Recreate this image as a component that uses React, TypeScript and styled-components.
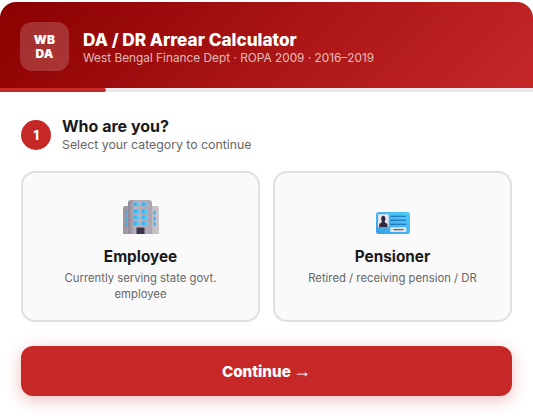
import React, { useState } from 'react';
import styled, { createGlobalStyle } from 'styled-components';

const GlobalStyle = createGlobalStyle`
  html, body {
    margin: 0;
    padding: 0;
    background: #fff;
    font-family: Inter, "Liberation Sans", sans-serif;
  }
  * { box-sizing: border-box; }
`;

const Page = styled.div`
  width: 533px;
  height: 418px;
  padding-top: 2px;
  overflow: hidden;
  background: #fff;
`;

const Header = styled.header`
  height: 86px;
  display: flex;
  align-items: flex-start;
  gap: 14px;
  padding: 20px 20px 0;
  border-radius: 16px 16px 0 0;
  background: linear-gradient(135deg, #8b0000 0%, #c62828 100%);
`;

const Logo = styled.div`
  width: 49px;
  height: 49px;
  border-radius: 12px;
  background: rgba(255, 255, 255, 0.18);
  display: flex;
  align-items: center;
  justify-content: center;
  text-align: center;
  color: #fff;
  font-size: 12px;
  font-weight: 900;
  line-height: 14px;
  letter-spacing: 0.3px;
`;

const HeaderText = styled.div`
  display: flex;
  flex-direction: column;
  padding-top: 7px;
`;

const Title = styled.h1`
  margin: 0;
  color: #fff;
  font-size: 17.2px;
  font-weight: 800;
  line-height: 22px;
`;

const Subtitle = styled.p`
  margin: 0;
  color: rgba(255, 255, 255, 0.72);
  font-size: 11.84px;
  line-height: 15px;
`;

const Track = styled.div`
  height: 4px;
  background: #e8e8e8;
`;

const Fill = styled.div`
  height: 100%;
  background: #c62828;
  border-radius: 0 2px 2px 0;
`;

const Body = styled.main`
  padding: 25px 21px 0;
`;

const StepHead = styled.div`
  display: flex;
  align-items: center;
  gap: 11px;
  margin-bottom: 19px;
`;

const StepBadge = styled.div`
  width: 30px;
  height: 30px;
  border-radius: 50%;
  background: #c62828;
  color: #fff;
  display: flex;
  align-items: center;
  justify-content: center;
  font-size: 13px;
  font-weight: 800;
`;

const StepText = styled.div`
  display: flex;
  flex-direction: column;
`;

const StepTitle = styled.h2`
  margin: 0;
  color: #1a1a1a;
  font-size: 16px;
  font-weight: 700;
  line-height: 18px;
`;

const StepHint = styled.p`
  margin: 2px 0 0;
  color: #666;
  font-size: 12.3px;
  line-height: 15px;
`;

const Choices = styled.div`
  display: grid;
  grid-template-columns: 1fr 1fr;
  gap: 13px;
  margin-bottom: 24px;
`;

const Choice = styled.button<{ $selected?: boolean }>`
  height: 151px;
  padding: 27px 20px 0;
  border: 2px solid ${(p) => (p.$selected ? '#c62828' : '#e0e0e0')};
  border-radius: 14px;
  background: #fafafa;
  font-family: inherit;
  display: flex;
  flex-direction: column;
  align-items: center;
  text-align: center;
  cursor: pointer;
`;

const IconSlot = styled.div`
  height: 34px;
  margin-bottom: 13px;
  display: flex;
  align-items: flex-end;
  justify-content: center;
`;

const ChoiceName = styled.div`
  color: #1a1a1a;
  font-size: 15.3px;
  font-weight: 700;
  line-height: 19px;
  margin-bottom: 3.5px;
`;

const ChoiceNote = styled.div`
  color: #666;
  font-size: 11.3px;
  line-height: 16.5px;
`;

const ContinueButton = styled.button`
  width: 100%;
  height: 50px;
  border: 0;
  border-radius: 12px;
  background: #c62828;
  color: #fff;
  font-family: inherit;
  font-size: 15.2px;
  font-weight: 800;
  box-shadow: 0 4px 16px rgba(198, 40, 40, 0.3);
  cursor: pointer;
`;

const Arrow = styled.span`
  margin-left: -1px;
  font-family: "Liberation Serif", serif;
  font-size: 18px;
  font-weight: 400;
  line-height: 1;
`;

const BuildingIcon = () => (
  <svg width="36" height="34" viewBox="0 0 36 34" aria-hidden="true">
    <defs>
      <linearGradient id="wall" x1="0" y1="0" x2="1" y2="0">
        <stop offset="0" stopColor="#8f8894" />
        <stop offset="0.3" stopColor="#b9b2bd" />
        <stop offset="1" stopColor="#ada6b2" />
      </linearGradient>
      <linearGradient id="wing" x1="0" y1="0" x2="1" y2="0">
        <stop offset="0" stopColor="#9d96a2" />
        <stop offset="1" stopColor="#c9c3cc" />
      </linearGradient>
      <linearGradient id="glass" x1="0" y1="0" x2="1" y2="0">
        <stop offset="0" stopColor="#2fa8f0" />
        <stop offset="1" stopColor="#62d4f8" />
      </linearGradient>
    </defs>
    <path d="M0 34V8Q0 6 2 6H34Q36 6 36 8V34Z" fill="url(#wing)" />
    <path d="M5 34V3Q5 0 8 0H26Q29 0 29 3V34Z" fill="url(#wall)" />
    {[2.5, 9.5, 15.5, 21.5].map((y) =>
      [11, 19].map((x) => <rect key={`${x}-${y}`} x={x} y={y} width="5.5" height="3.6" fill="url(#glass)" />),
    )}
    {[11, 17, 22.5].map((y) => (
      <React.Fragment key={y}>
        <rect x="2.5" y={y} width="2" height="3.4" fill="#35b0f0" />
        <rect x="30.5" y={y} width="2" height="3.4" fill="#35b0f0" />
      </React.Fragment>
    ))}
    <rect x="13.5" y="27.5" width="8" height="6.5" fill="#3f3350" />
  </svg>
);

const IdCardIcon = () => (
  <svg width="34" height="22" viewBox="0 0 34 22" aria-hidden="true">
    <defs>
      <linearGradient id="card" x1="0" y1="1" x2="1" y2="0">
        <stop offset="0" stopColor="#3a9de5" />
        <stop offset="1" stopColor="#4fd0f8" />
      </linearGradient>
    </defs>
    <rect width="34" height="22" rx="2.5" fill="url(#card)" />
    <rect x="2" y="2.3" width="10.7" height="12.7" fill="#e8e4ea" />
    <path d="M3.2 15V12.8Q3.2 11.3 5.3 10.8L6 9.4Q4.9 8 5.2 6Q5.7 3.8 7.3 3.8Q8.9 3.8 9.4 6Q9.7 8 8.6 9.4L9.3 10.8Q11.5 11.3 11.5 12.8V15Z" fill="#33293f" />
    <rect x="14.3" y="3.7" width="16" height="1.1" fill="#1f6fb8" />
    <rect x="14.3" y="7.7" width="16" height="1.1" fill="#1f6fb8" />
    <rect x="14.3" y="11.7" width="16" height="1.1" fill="#1f6fb8" />
    <rect x="14.3" y="15.2" width="16" height="4.8" rx="0.5" fill="#e6e3e8" />
    <rect x="17.5" y="17.2" width="10" height="1" fill="#4a4350" />
  </svg>
);

const App: React.FC = () => {
  const [category, setCategory] = useState<'employee' | 'pensioner' | null>(null);

  return (
    <Page>
      <GlobalStyle />
      <Header>
        <Logo>
          WB
          <br />
          DA
        </Logo>
        <HeaderText>
          <Title>DA / DR Arrear Calculator</Title>
          <Subtitle>West Bengal Finance Dept · ROPA 2009 · 2016–2019</Subtitle>
        </HeaderText>
      </Header>
      <Track>
        <Fill style={{ width: `${(1 / 5) * 99}%` }} />
      </Track>
      <Body>
        <StepHead>
          <StepBadge>1</StepBadge>
          <StepText>
            <StepTitle>Who are you?</StepTitle>
            <StepHint>Select your category to continue</StepHint>
          </StepText>
        </StepHead>
        <Choices>
          <Choice $selected={category === 'employee'} onClick={() => setCategory('employee')}>
            <IconSlot>
              <BuildingIcon />
            </IconSlot>
            <ChoiceName>Employee</ChoiceName>
            <ChoiceNote>Currently serving state govt. employee</ChoiceNote>
          </Choice>
          <Choice $selected={category === 'pensioner'} onClick={() => setCategory('pensioner')}>
            <IconSlot>
              <IdCardIcon />
            </IconSlot>
            <ChoiceName>Pensioner</ChoiceName>
            <ChoiceNote>Retired / receiving pension / DR</ChoiceNote>
          </Choice>
        </Choices>
        <ContinueButton>
          Continue <Arrow>→</Arrow>
        </ContinueButton>
      </Body>
    </Page>
  );
};

export default App;
